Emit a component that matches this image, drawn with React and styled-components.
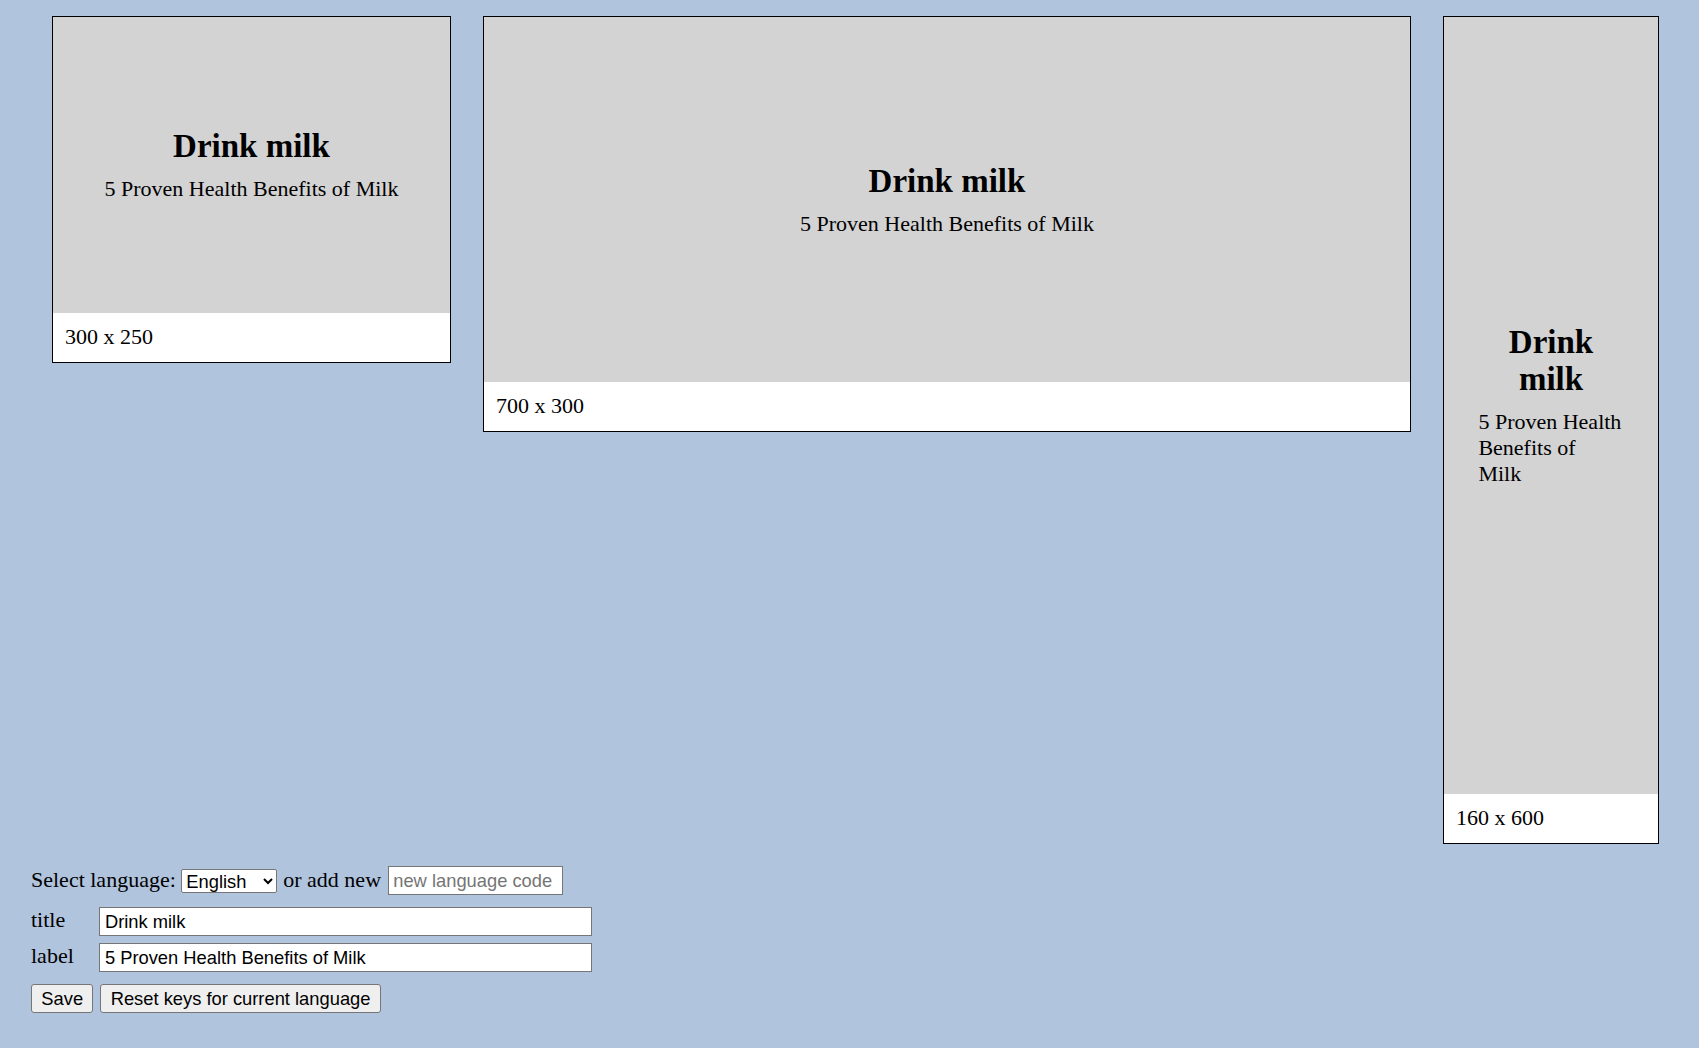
import React from "react";
import styled, { createGlobalStyle } from "styled-components";

const GlobalStyle = createGlobalStyle`
  html, body {
    margin: 0;
    padding: 0;
    background: #b0c4de;
    font-family: "Liberation Serif", "Times New Roman", serif;
    color: #000;
  }
  #root { min-height: 100vh; }
`;

const Page = styled.div`
  padding: 16px 0 0 31px;
`;

const BannerRow = styled.div`
  display: flex;
  align-items: flex-start;
  gap: 32px;
  padding-left: 21px;
`;

const Banner = styled.div`
  width: ${(p) => p.$w}px;
  box-sizing: border-box;
  border: 1px solid #000;
  display: flex;
  flex-direction: column;
  flex-shrink: 0;
`;

const Art = styled.div`
  height: ${(p) => p.$h}px;
  background: #d3d3d3;
  display: flex;
  flex-direction: column;
  align-items: center;
  justify-content: center;
  padding: 0 34.4px;
`;

const Title = styled.h2`
  margin: 0 0 11px;
  font-size: 33px;
  line-height: 37px;
  font-weight: bold;
  text-align: center;
`;

const Subtitle = styled.p`
  margin: 0;
  font-size: 22px;
  line-height: 26px;
  text-align: left;
`;

const Footer = styled.div`
  height: 49px;
  box-sizing: border-box;
  background: #fff;
  display: flex;
  align-items: center;
  padding: 0 12px 2px;
  font-size: 22px;
`;

const Form = styled.div`
  margin-top: 22px;
  font-size: 22px;
`;

const LangRow = styled.div`
  display: flex;
  align-items: baseline;
`;

const Text = styled.span`
  margin-left: ${(p) => p.$ml || 0}px;
`;

const Select = styled.select`
  margin-left: 5.5px;
  width: 96px;
  height: 24px;
  align-self: center;
  font-family: "Liberation Sans", Arial, sans-serif;
  font-size: 18.33px;
  color: #000;
  background: #fff;
  border: 1px solid #767676;
  border-radius: 2px;
  padding: 0;
`;

const TextInput = styled.input`
  box-sizing: border-box;
  height: 29px;
  width: ${(p) => p.$w}px;
  margin: 0 0 0 ${(p) => p.$ml || 0}px;
  font-family: "Liberation Sans", Arial, sans-serif;
  font-size: 18.33px;
  color: #000;
  background: #fff;
  border: 1px solid #767676;
  border-radius: 0;
  padding: 0 4.5px;
  outline: none;
  &::placeholder { color: #757575; }
`;

const FieldGrid = styled.div`
  margin-top: 12px;
  display: grid;
  grid-template-columns: 68.4px 493px;
  row-gap: 7px;
  align-items: start;
`;

const FieldLabel = styled.label`
  line-height: 25px;
`;

const Buttons = styled.div`
  margin-top: 12px;
  display: flex;
  gap: 7px;
`;

const Button = styled.button`
  height: 29px;
  padding: 0 9.3px;
  font-family: "Liberation Sans", Arial, sans-serif;
  font-size: 18.33px;
  color: #000;
  background: #efefef;
  border: 1px solid #767676;
  border-radius: 3px;
`;

const banners = [
  { w: 399, h: 296, size: "300 x 250" },
  { w: 928, h: 365, size: "700 x 300" },
  { w: 216, h: 777, size: "160 x 600" },
];

export default function App() {
  const title = "Drink milk";
  const label = "5 Proven Health Benefits of Milk";
  return (
    <Page>
      <GlobalStyle />
      <BannerRow>
        {banners.map((b) => (
          <Banner key={b.size} $w={b.w}>
            <Art $h={b.h}>
              <Title>{title}</Title>
              <Subtitle>{label}</Subtitle>
            </Art>
            <Footer>{b.size}</Footer>
          </Banner>
        ))}
      </BannerRow>
      <Form>
        <LangRow>
          <Text>Select language:</Text>
          <Select defaultValue="en">
            <option value="en">English</option>
          </Select>
          <Text $ml={6}>or add new</Text>
          <TextInput $w={175} $ml={6.7} placeholder="new language code" />
        </LangRow>
        <FieldGrid>
          <FieldLabel>title</FieldLabel>
          <TextInput $w={493} defaultValue={title} />
          <FieldLabel>label</FieldLabel>
          <TextInput $w={493} defaultValue={label} />
        </FieldGrid>
        <Buttons>
          <Button>Save</Button>
          <Button>Reset keys for current language</Button>
        </Buttons>
      </Form>
    </Page>
  );
}
